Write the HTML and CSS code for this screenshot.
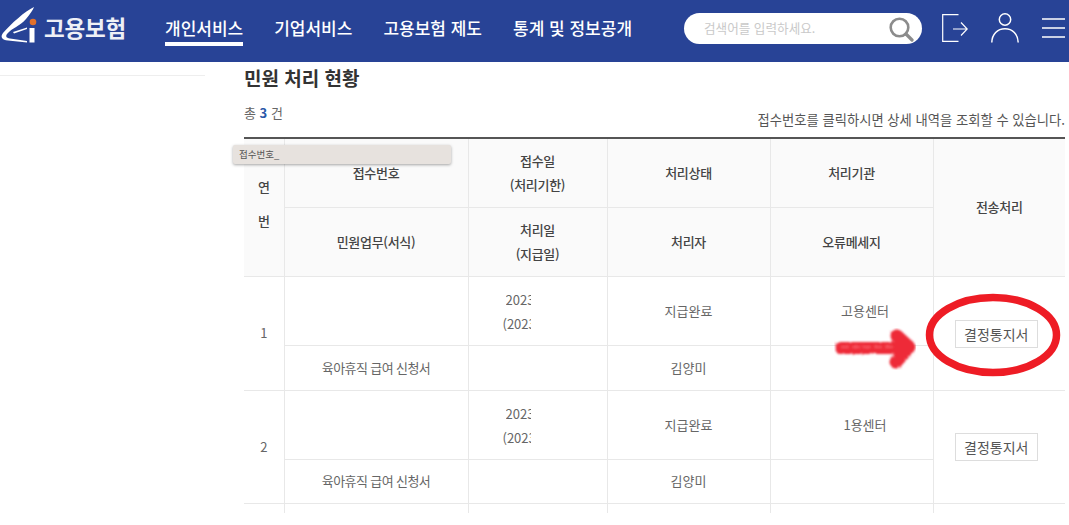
FILE: index.html
```html
<!DOCTYPE html>
<html lang="ko">
<head>
<meta charset="utf-8">
<title>민원 처리 현황</title>
<link rel="stylesheet" href="styles.css">
</head>
<body>
<div class="page">
  <header class="topbar">
    <a class="logo">
      <svg class="logo-mark" width="38" height="46" viewBox="0 1 38 46">
        <path d="M34 7 C25 11 11 24 3 33 C0 37 2 40 8 40.500 L27 42.500 L27 41 L10 38.500 C6 38 5.500 36 7 34 C12 28 20 26 26 19 C30 14 33 10 34 7 Z" fill="#fff"/>
        <path d="M13 32 L27 27.500 L27 29 L14 33.500 Z" fill="#fff"/>
        <circle cx="33" cy="22" r="3.300" fill="#e0702c"/>
        <rect x="29.500" y="28" width="5" height="14.500" fill="#fff"/>
      </svg>
      <span class="logo-text">고용보험</span>
    </a>
    <nav class="nav">
      <a class="nav-item active">개인서비스</a>
      <a class="nav-item">기업서비스</a>
      <a class="nav-item">고용보험 제도</a>
      <a class="nav-item">통계 및 정보공개</a>
    </nav>
    <div class="search">
      <span class="search-hint">검색어를 입력하세요.</span>
      <svg width="26" height="26" viewBox="0 0 26 26" fill="none" stroke="#8c8c8c">
        <circle cx="11.500" cy="11.500" r="8.800" stroke-width="2.600"/>
        <path d="M18 18 L24 24" stroke-width="3.200" stroke-linecap="round"/>
      </svg>
    </div>
    <svg class="tool t-door" width="26" height="28" viewBox="0 0 26 28" fill="none" stroke="#fff" stroke-width="1.200">
      <path d="M16.500 0.600 H0.700 V27.400 H16.500"/>
      <path d="M11 15 H25 M19 8.500 L25.200 15 L19 21.500"/>
    </svg>
    <svg class="tool t-user" width="28" height="30" viewBox="0 0 28 30" fill="none" stroke="#fff" stroke-width="1.500">
      <circle cx="14" cy="6.500" r="5.700"/>
      <path d="M0.800 29.500 C1 21 6.500 15.800 14 15.800 C21.500 15.800 27 21 27.200 29.500"/>
    </svg>
    <svg class="tool t-menu" width="23" height="20" viewBox="0 0 23 20" fill="none" stroke="#fff" stroke-width="1.300">
      <path d="M0 1 H23 M0 10 H23 M0 19 H23"/>
    </svg>
  </header>

  <div class="body-row">
    <aside class="side"><div class="side-line"></div></aside>
    <main class="content">
      <h1 class="title">민원 처리 현황</h1>
      <div class="meta">
        <span class="count">총 <b>3</b> 건</span>
        <span class="hint">접수번호를 클릭하시면 상세 내역을 조회할 수 있습니다.</span>
      </div>
      <div class="table-wrap">
        <table class="grid">
          <colgroup>
            <col class="c1"><col class="c2"><col class="c3"><col class="c4"><col class="c5"><col class="c6">
          </colgroup>
          <thead>
            <tr class="hr">
              <th rowspan="2" class="narrow">연<br>번</th>
              <th class="up">접수번호</th>
              <th>접수일<br>(처리기한)</th>
              <th>처리상태</th>
              <th>처리기관</th>
              <th rowspan="2">전송처리</th>
            </tr>
            <tr class="hr">
              <th>민원업무(서식)</th>
              <th>처리일<br>(지급일)</th>
              <th>처리자</th>
              <th>오류메세지</th>
            </tr>
          </thead>
          <tbody>
            <tr class="r-top">
              <td rowspan="2">1</td>
              <td></td>
              <td class="dates"><span class="clip a">2023</span><span class="clip b">(2023</span></td>
              <td>지급완료</td>
              <td class="org">고용센터</td>
              <td rowspan="2"><a class="btn">결정통지서</a></td>
            </tr>
            <tr class="r-bot">
              <td class="form">육아휴직 급여 신청서</td>
              <td></td>
              <td>김양미</td>
              <td></td>
            </tr>
            <tr class="r-top">
              <td rowspan="2">2</td>
              <td></td>
              <td class="dates"><span class="clip a">2023</span><span class="clip b">(2023</span></td>
              <td>지급완료</td>
              <td class="org">1용센터</td>
              <td rowspan="2"><a class="btn">결정통지서</a></td>
            </tr>
            <tr class="r-bot r-short">
              <td class="form">육아휴직 급여 신청서</td>
              <td></td>
              <td>김양미</td>
              <td></td>
            </tr>
            <tr class="r-top">
              <td rowspan="2"></td><td></td><td></td><td></td><td></td><td rowspan="2"></td>
            </tr>
          </tbody>
        </table>
      </div>
    </main>
  </div>

  <div class="tip">접수번호_</div>

  <svg class="ink" width="1069" height="525" viewBox="0 0 1069 525" fill="none">
    <defs>
      <filter id="rough" x="-10%" y="-30%" width="120%" height="160%">
        <feTurbulence type="fractalNoise" baseFrequency="0.4" numOctaves="2" seed="4" result="n"/>
        <feDisplacementMap in="SourceGraphic" in2="n" scale="3" result="d"/>
        <feGaussianBlur in="d" stdDeviation="0.800"/>
      </filter>
    </defs>
    <ellipse cx="993" cy="335" rx="63.500" ry="37.500" stroke="#ee1c25" stroke-width="7.500"/>
    <g filter="url(#rough)" stroke-linecap="round" stroke-linejoin="round">
      <path d="M841 348 H907" stroke="#ee2a38" stroke-width="12"/>
      <path d="M897 336 L909 347 L896 362" stroke="#ee2a38" stroke-width="13"/>
      <path d="M842 347 H892" stroke="#f6505c" stroke-width="2" stroke-dasharray="6 5"/>
    </g>
  </svg>
</div>
</body>
</html>
```
FILE: styles.css
```css
* { box-sizing: border-box; }
html, body { margin: 0; padding: 0; background: #fff; }
body {
  font-family: "Noto Sans CJK KR", "Noto Sans", sans-serif;
  color: #555;
}
.page { position: relative; width: 1069px; height: 525px; overflow: hidden; }

.topbar {
  height: 62px;
  background: #284396;
  display: flex;
  align-items: center;
  color: #fff;
}
.logo {
  display: flex;
  align-items: center;
  align-self: flex-start;
  height: 54px;
  width: 165px;
  flex: none;
}
.logo-mark { flex: none; margin-top: -6px; }
.logo-text {
  font-size: 22.500px;
  font-weight: 700;
  line-height: 1;
  margin-left: 6px;
  color: #eef0f6;
  letter-spacing: -0.2px;
}
.nav { display: flex; gap: 31px; width: 519px; flex: none; align-self: flex-start; margin-top: 13px; }
.nav-item {
  font-size: 17px;
  font-weight: 500;
  line-height: 24px;
  height: 33px;
  white-space: nowrap;
  padding-top: 3px;
  border-bottom: 4px solid transparent;
}
.nav-item.active { border-bottom-color: #fff; }
.search {
  width: 238px;
  height: 31px;
  background: #fff;
  border-radius: 16px;
  display: flex;
  align-items: center;
  justify-content: space-between;
  padding: 0 0 0 20px;
  flex: none;
  margin-top: -6px;
}
.search svg { margin-right: 8px; margin-top: 1px; }
.search-hint { font-size: 12.600px; color: #c9c9c9; line-height: 1; }
.tool { flex: none; }
.t-door { margin: -6px 0 0 20px; }
.t-user { margin: -6px 0 0 23px; }
.t-menu { margin: -7px 0 0 23px; }

.body-row { display: flex; }
.side { width: 244px; flex: none; }
.side-line { width: 205px; height: 1px; background: #eee; margin-top: 13px; }
.content { width: 821px; flex: none; }
.title {
  margin: 3px 0 0;
  font-size: 19px;
  line-height: 26px;
  font-weight: 700;
  color: #333;
}
.meta {
  display: flex;
  justify-content: space-between;
  height: 36px;
  margin-top: 9px;
}
.count { font-size: 13px; line-height: 20px; color: #666; margin-top: 3px; }
.count b { color: #2b58a8; font-weight: 700; }
.hint { font-size: 13.300px; line-height: 20px; color: #555; margin-top: 10px; white-space: nowrap; }

.table-wrap { height: 376px; overflow: hidden; margin-top: 1px; }
.grid {
  width: 821px;
  table-layout: fixed;
  border-collapse: collapse;
  border-top: 2px solid #555;
  font-size: 13px;
}
.c1 { width: 40px; } .c2 { width: 184px; } .c3 { width: 139px; }
.c4 { width: 163px; } .c5 { width: 163px; } .c6 { width: 132px; }
.grid th, .grid td {
  border: 1px solid #e8e8e8;
  text-align: center;
  padding: 0;
  vertical-align: middle;
  line-height: 24px;
}
.grid tr > :first-child { border-left: 0; }
.grid tr > :last-child { border-right: 0; }
.grid thead tr:first-child th { border-top: 0; }
.grid th {
  background: #fafafa;
  font-weight: 500;
  color: #444;
  font-size: 13px;
  letter-spacing: -0.3px;
}
.grid .narrow { line-height: 34px; padding-bottom: 6px; }
.grid td { color: #666; }
.hr { height: 69px; }
.r-top { height: 69px; }
.r-bot { height: 45px; }
.r-short { height: 44px; }
.up { padding-bottom: 2px; }
.grid .org { padding-left: 27px; }
.grid .form { letter-spacing: -0.6px; }
.grid .dates { padding-top: 2px; }
.clip {
  display: block;
  height: 24px;
  line-height: 24px;
  overflow: hidden;
  white-space: nowrap;
  text-align: left;
  font-size: 13px;
}
.clip.a { margin-left: 37px; width: 25px; }
.clip.b { margin-left: 34px; width: 28px; }
.btn {
  display: inline-block;
  width: 83px;
  height: 28px;
  line-height: 26px;
  border: 1px solid #ddd;
  background: #fff;
  color: #555;
  font-size: 14px;
  margin: 1px 6px 0 0;
  vertical-align: middle;
}
.tip {
  position: absolute;
  left: 233px;
  top: 145px;
  width: 218px;
  height: 19px;
  background: #e7e2de;
  border-radius: 2px;
  box-shadow: 0 1px 3px rgba(0, 0, 0, 0.35);
  font-size: 9.500px;
  line-height: 18px;
  padding-left: 6px;
  color: #555;
}
.ink { position: absolute; left: 0; top: 0; pointer-events: none; }
```
